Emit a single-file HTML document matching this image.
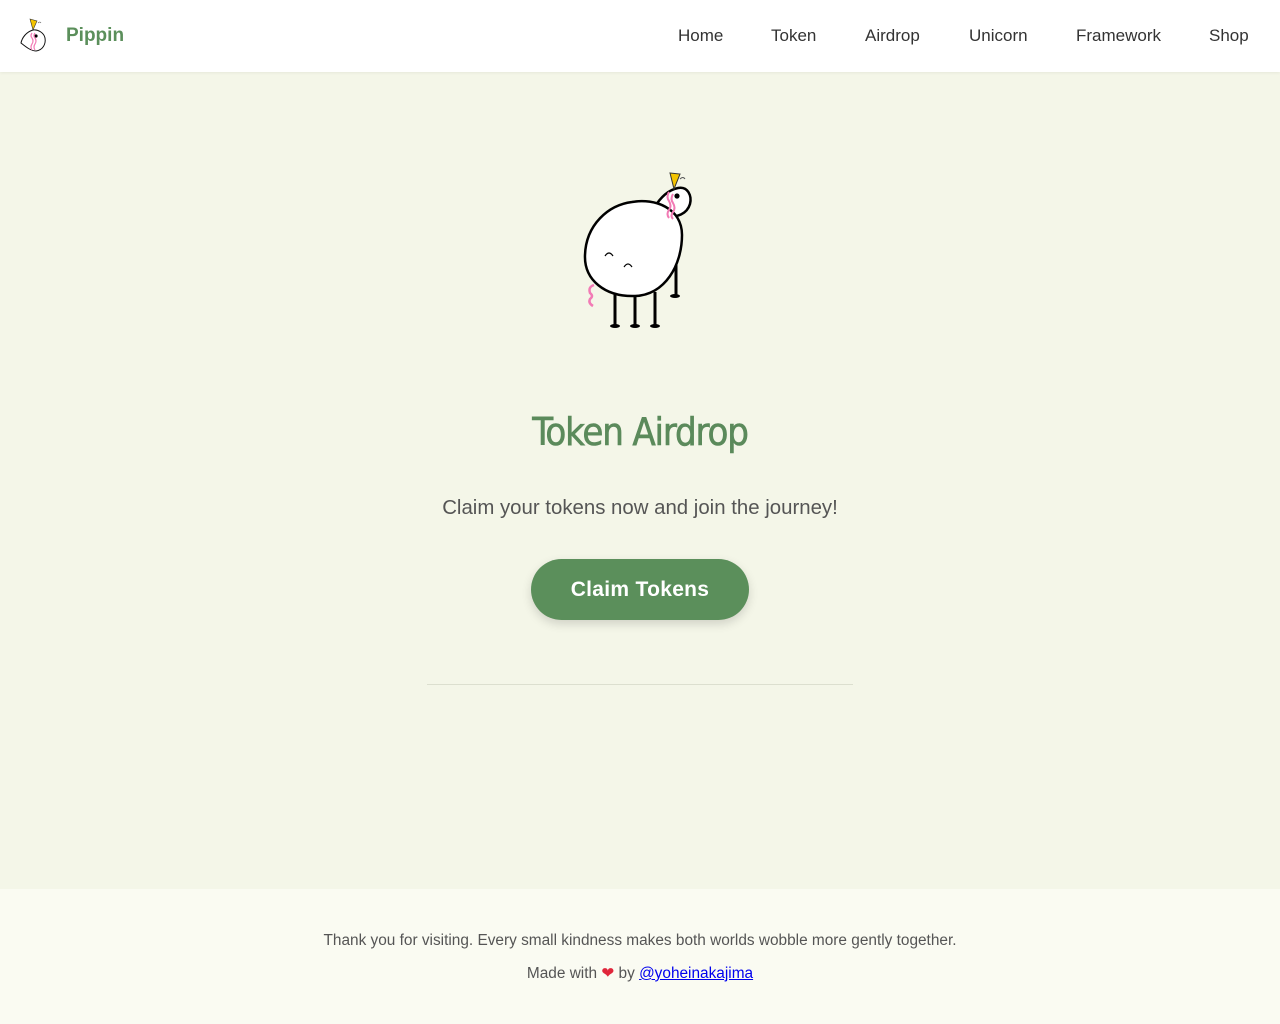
<!DOCTYPE html>
<html><head><meta charset="utf-8"><style>
*{margin:0;padding:0;box-sizing:border-box}
body{width:1280px;height:1024px;background:#f4f6e8;font-family:"Liberation Sans","DejaVu Sans",sans-serif;position:relative;overflow:hidden}
header{position:absolute;top:0;left:0;width:1280px;height:72px;background:#fff;box-shadow:0 1px 3px rgba(0,0,0,.06)}
.logo{position:absolute;left:66px;top:25px;font-size:19px;font-weight:bold;color:#5b8f5b}
nav a{position:absolute;top:26px;font-size:17px;color:#333;text-decoration:none}
h1{position:absolute;top:410px;left:0;width:1280px;text-align:center;font-family:"DejaVu Sans Condensed","DejaVu Sans",sans-serif;font-weight:normal;font-size:38px;color:#5b8a5b;letter-spacing:-1.2px;-webkit-text-stroke:0.6px #5b8a5b}
.sub{position:absolute;top:497px;left:0;width:1280px;text-align:center;font-size:20.4px;color:#555}
.btn{position:absolute;left:531px;top:559px;width:218px;height:61px;border-radius:31px;background:#5b8f5b;color:#fff;font-size:21px;font-weight:bold;text-align:center;line-height:61px;box-shadow:0 4px 10px rgba(0,0,0,.15);letter-spacing:.3px}
.hr{position:absolute;left:427px;top:684px;width:426px;height:1px;background:#dcdfcf}
footer{position:absolute;top:889px;left:0;width:1280px;height:135px;background:#fafbf2;text-align:center;color:#555;font-size:15.4px}
footer p{position:absolute;left:0;width:1280px}
footer a{color:#00e;text-decoration:underline}
</style></head><body>
<header>
<svg style="position:absolute;left:18px;top:16px" width="32" height="40" viewBox="0 0 32 40">
<path d="M12 3 L19 5 L15 14 Z" fill="#f4c400" stroke="#333" stroke-width=".6"/>
<path d="M20 7 q2 -2 3 0" fill="none" stroke="#555" stroke-width=".6"/>
<path d="M15 14 C8 16 4 22 3 27 C8 31 13 35 18 35 C25 34 28 28 27 22 C26 17 20 13 15 14 Z" fill="#fff" stroke="#111" stroke-width="1"/>
<circle cx="18" cy="20" r="1.6" fill="#000"/>
<path d="M14 17 q-2 3 0 5 q2 3 0 6 q-2 3 0 6" fill="none" stroke="#f27bb5" stroke-width="1.2"/>
<path d="M17 17 q-2 3 0 5 q2 3 0 6 q-2 3 0 6" fill="none" stroke="#f27bb5" stroke-width="1.2"/>
</svg>
<div class="logo">Pippin</div>
<nav>
<a style="left:678px">Home</a><a style="left:771px">Token</a><a style="left:865px">Airdrop</a><a style="left:969px">Unicorn</a><a style="left:1076px">Framework</a><a style="left:1209px">Shop</a>
</nav>
</header>
<svg style="position:absolute;left:570px;top:160px" width="140" height="180" viewBox="0 0 140 180">
<line x1="106" y1="90" x2="106" y2="135" stroke="#000" stroke-width="3"/>
<ellipse cx="105" cy="136" rx="5" ry="2" fill="#000"/>
<line x1="45" y1="132" x2="45" y2="165" stroke="#000" stroke-width="3"/>
<line x1="65" y1="132" x2="65" y2="165" stroke="#000" stroke-width="3"/>
<line x1="85" y1="132" x2="85" y2="165" stroke="#000" stroke-width="3"/>
<ellipse cx="45" cy="166" rx="5" ry="2" fill="#000"/>
<ellipse cx="65" cy="166" rx="5" ry="2" fill="#000"/>
<ellipse cx="85" cy="166" rx="5" ry="2" fill="#000"/>
<path d="M108 28 C118 26 122 36 120 44 C117 54 106 58 100 55 L84 48 C90 38 98 30 108 28 Z" fill="#fff" stroke="#000" stroke-width="2.5"/>
<path d="M62 42 C85 38 112 48 112 75 C112 105 95 135 65 136 C35 137 14 120 15 95 C16 65 38 45 62 42 Z" fill="#fff" stroke="#000" stroke-width="2.5"/>
<path d="M100 13 L110 14 L104 29 Z" fill="#f4c400" stroke="#333" stroke-width="1"/>
<path d="M110 19 q3 -3 5 0" fill="none" stroke="#555" stroke-width="1"/>
<circle cx="107" cy="36" r="2.6" fill="#000"/>
<path d="M99 32 q-3 5 0 9 q3 5 0 9 q-3 4 0 8" fill="none" stroke="#f27bb5" stroke-width="2"/>
<path d="M103 34 q-3 5 0 9 q3 5 0 9 q-3 4 0 7" fill="none" stroke="#f27bb5" stroke-width="2"/>
<path d="M24 125 q-6 2 -4 8 q4 3 0 6 q-2 4 3 7" fill="none" stroke="#f27bb5" stroke-width="2.5"/>
<path d="M35 96 q4 -6 8 0" fill="none" stroke="#000" stroke-width="1.2"/>
<path d="M54 107 q4 -6 8 0" fill="none" stroke="#000" stroke-width="1.2"/>
</svg>
<h1>Token Airdrop</h1>
<div class="sub">Claim your tokens now and join the journey!</div>
<div class="btn">Claim Tokens</div>
<div class="hr"></div>
<footer>
<p style="top:43px">Thank you for visiting. Every small kindness makes both worlds wobble more gently together.</p>
<p style="top:75px">Made with <span style="color:#e0263b">❤</span> by <a>@yoheinakajima</a></p>
</footer>
</body></html>
